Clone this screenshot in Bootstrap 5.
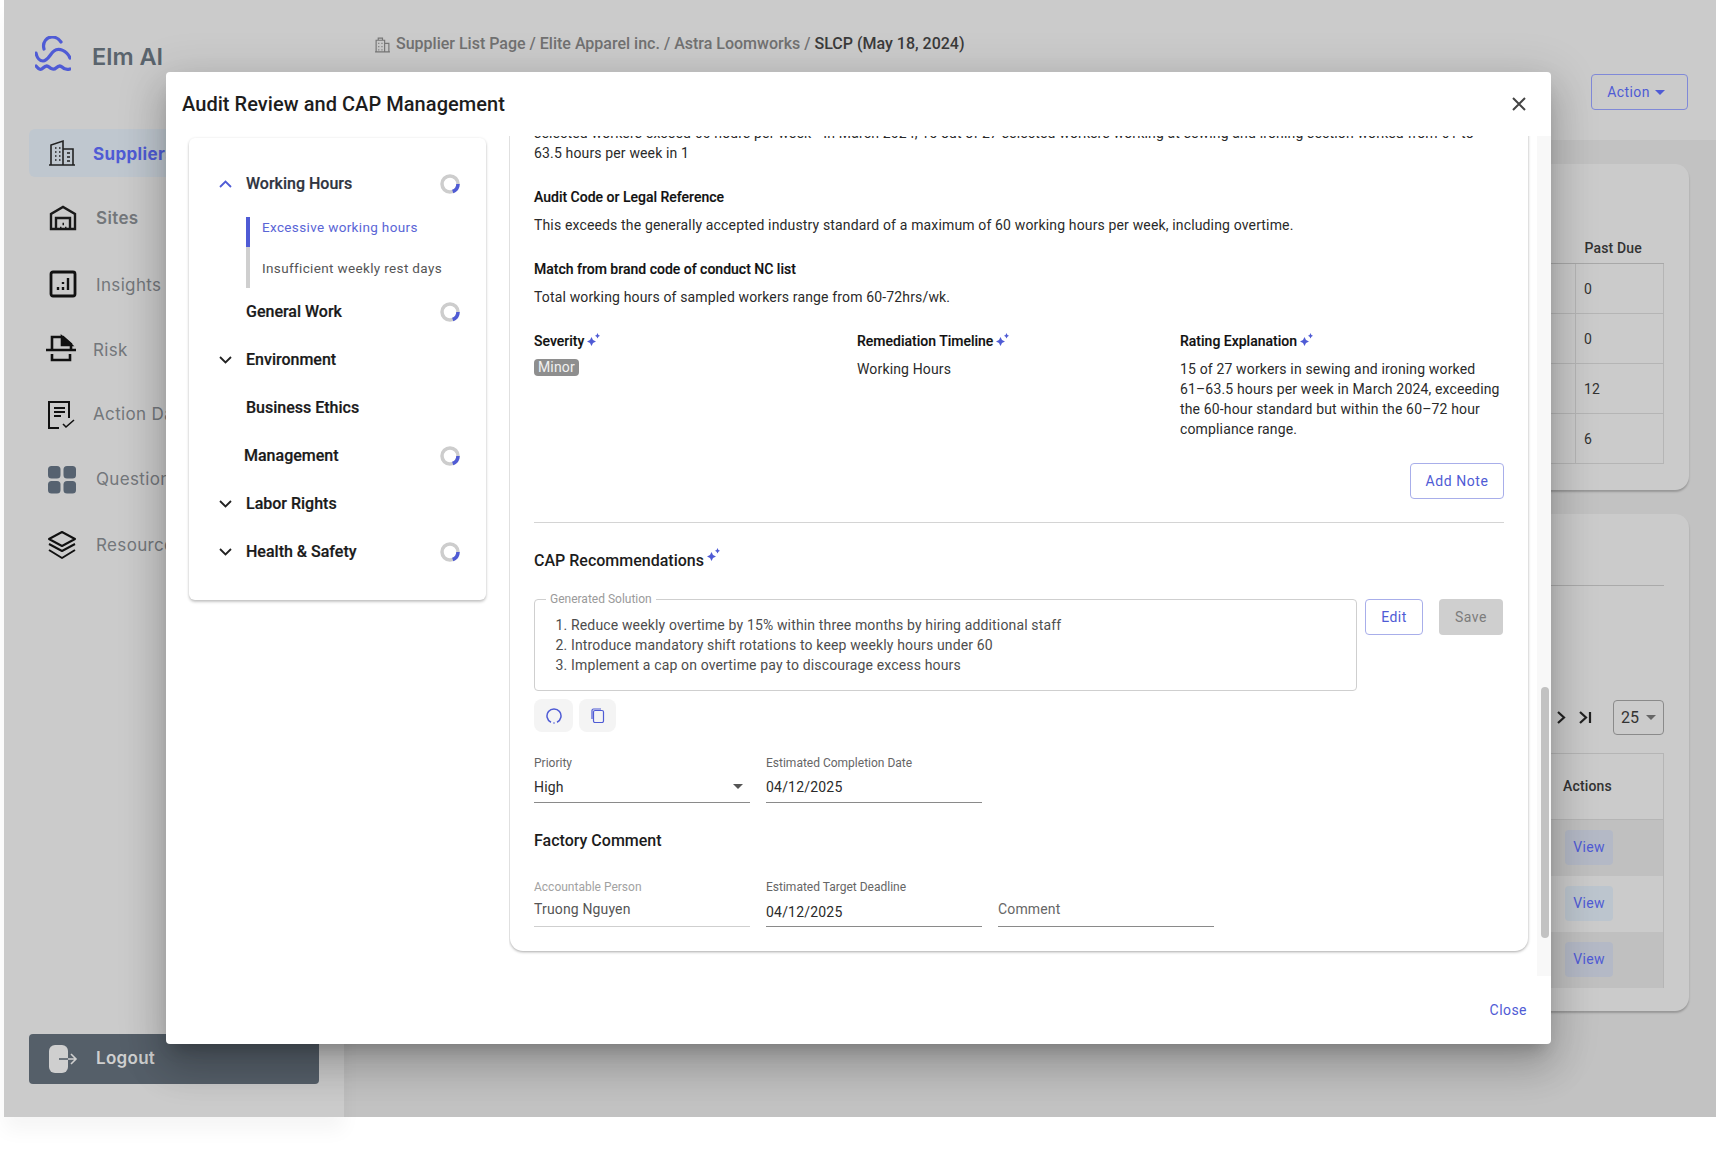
<!DOCTYPE html>
<html lang="en">
<head>
<meta charset="utf-8">
<title>Audit Review and CAP Management</title>
<link href="https://cdn.jsdelivr.net/npm/bootstrap@5.3.0/dist/css/bootstrap.min.css" rel="stylesheet">
<style>
html,body{height:1150px;overflow:hidden;background:#fff}
body{font-family:Roboto,"Liberation Sans",sans-serif;font-size:14px;color:#212121;position:relative}
svg{display:block;flex:none}
.app-shell{margin-left:4px;height:1117px;background:#c2c2c2;width:1712px}
.side-rail{width:340px;background:#cbcbcb;box-shadow:0 14px 18px rgba(0,0,0,.04);font-family:Inter,"Liberation Sans",sans-serif;padding:36px 25px 33px}
.brand-name{font-size:23.5px;font-weight:600;color:#5a646d;margin-left:21px;margin-top:5px}
.brand-row{margin-left:6px;height:36px;margin-bottom:57px}
.rail-item{height:48px;border-radius:6px;margin-bottom:17.4px;color:#73777b;font-size:17px;letter-spacing:.35px;white-space:nowrap;overflow:hidden}
.rail-item svg{width:30px;height:30px}
.rail-item.is-on{background:#bfc7cf;color:#4f5bd5;font-weight:700}
.rail-item.is-on span{padding-top:3px}
.rail-down span{padding-top:3px}
.rail-a{padding-left:18px}.rail-a svg{margin-right:16px}
.rail-b{padding-left:19px}.rail-b svg{margin-right:18px}
.rail-c{padding-left:17px}.rail-c svg{margin-right:17px}
.rail-d{padding-left:16px}.rail-d svg{margin-right:18px}
.rail-e{padding-left:18px}.rail-e svg{margin-right:19px}
.rail-f{padding-left:18px}.rail-f svg{margin-right:19px}
.rail-semi{font-weight:600}
.rail-logout{height:50px;background:#555f69;color:#cfcfcf;border-radius:4px;font-weight:600;font-size:17px;padding-left:19px;letter-spacing:.3px}
.rail-logout svg{margin-right:18px}
.top-strip{height:140px;background:#cbcbcb;padding:0 28px 0 30px}
.crumbs{padding-top:32px;font-size:16px;color:#717171;font-weight:500;height:74px}
.crumbs .sep{margin:0 4px}
.crumbs .cur{color:#3a3a3a}
.crumbs .first-crumb{margin-left:1px}
.act-btn{width:97px;height:36px;border:1px solid #8089d8;border-radius:4px;color:#4f5bd5;font-size:14px;font-weight:400;background:transparent;letter-spacing:.4px;padding:0 7px 0 0;gap:5px}
.caret-down{width:0;height:0;border-left:5px solid transparent;border-right:5px solid transparent;border-top:5px solid currentColor;display:inline-block}
.back-area{padding:24px 27px 0 22px}
.back-card{background:#cbcbcb;border-radius:14px;box-shadow:0 2px 2px rgba(0,0,0,.22);padding:0 25px}
.back-one{height:326px;padding-top:68px;margin-bottom:24px}
.back-two{height:497px;padding-top:71px}
.back-grid{width:100%;color:#333;border-collapse:collapse;letter-spacing:.15px}
.back-one .back-grid th{font-weight:500;height:31px;padding:2px 0 0 9px;border-bottom:1px solid #a8a8a8}
.back-one .back-grid td{height:50px;border-bottom:1px solid #b5b5b5;padding:2px 0 0 8px}
.back-one .back-grid .cell-num{width:88px;border-left:1px solid #b5b5b5;border-right:1px solid #b5b5b5}
.back-one .back-grid th.cell-num{border-left:0;border-right:0}
.back-one .back-grid th.cell-blank{border:0;border-bottom:1px solid #a8a8a8}
.rule-back{border-top:1px solid #aaa;height:115px}
.pager-row{height:53px;color:#333;position:relative}
.pager-next{margin-right:11px}
.page-size{width:51px;height:35px;border:1px solid #8a8a8a;border-radius:4px;font-size:16px;margin-left:21px;color:#333}
.page-size .caret-down{color:#666;margin-left:7px}
.back-two .back-grid th{height:66px;font-weight:500;border-top:1px solid #b5b5b5;border-right:1px solid #b5b5b5;border-bottom:1px solid #b5b5b5;padding-left:20px}
.back-two .back-grid .col-acts{width:121px}
.back-two .back-grid td{height:56px;border-right:1px solid #b5b5b5;padding-left:22px}
.back-two .back-grid tr.row-dark td{background:#c0c0c0}
.view-chip{width:48px;height:35px;background:#bcc5ce;border-radius:4px;color:#4f5bd5;font-weight:400;letter-spacing:.3px}
.row-dark .view-chip{background:#b4b9c6}
.review-dialog{position:absolute;left:166px;top:72px;width:1385px;height:972px;z-index:5;border-radius:4px;background:#fff;box-shadow:0 11px 15px -7px rgba(0,0,0,.2),0 24px 38px 3px rgba(0,0,0,.14),0 9px 46px 8px rgba(0,0,0,.12)}
.dlg-head{height:64px;padding:0 16px}
.dlg-title{font-size:20px;font-weight:500;color:#1d1d1d;margin:20px 0 0 0;letter-spacing:.05px}
.dlg-close{margin-right:9px;margin-top:24px;background:none;border:0;padding:0;height:16px}
.dlg-body{flex:1;min-height:0;overflow:hidden;padding-top:2px}
.topics-card{width:297px;height:462px;margin-left:23px;background:#fff;border-radius:6px;box-shadow:0 2px 3px rgba(0,0,0,.22),0 0 3px rgba(0,0,0,.08);padding:34px 26px 0 0;flex:none}
.topic-row{height:48px;font-size:16px;font-weight:500;color:#1a1a1a;position:relative;padding-left:57px;-webkit-text-stroke:.2px currentColor}
.topic-row.is-open{color:#30343f}
.topic-row.nudged{padding-left:55px}
.topic-row.first{margin-top:12px}
.topic-arrow{position:absolute;left:30px;top:8px}
.prog-ring{margin-left:auto;margin-top:2px}
.sub-topic{height:41px;font-size:13.5px;border-left:4px solid #cfcfcf;margin-left:57px;padding-left:12px;color:#555;letter-spacing:.35px;white-space:nowrap}
.sub-topic span{margin-top:2px}
.sub-topic.is-on{height:30px;border-color:#4f5bd5;color:#5a65d6}
.sub-topic.is-on span{margin-top:-9px}
.sub-wrap{margin-top:-3px}
.detail-pane{margin:-2px 0 68px 23px;position:relative;flex:1;min-width:0;overflow:hidden;padding:0 23px 0 2px}
.detail-inner{margin-top:-40px}
.detail-card{width:1018px;background:#fff;border-radius:0 0 13px 13px;box-shadow:0 1px 3px rgba(0,0,0,.35);padding:27px 24px 24px 24px;height:855px;margin-left:-1px}
.line-text{line-height:20px;color:#2a2a2a;letter-spacing:.15px}
.line-head{line-height:20px;font-weight:500;color:#111;font-size:14px;-webkit-text-stroke:.15px #111}
.gap-l{margin-top:24px}
.gap-s{margin-top:8px}
.spark{display:inline-block;vertical-align:top;margin-left:-1px;margin-top:2px}
.spark.on-cap{margin-top:-1px;margin-left:-1px}
.severity-tag{background:#8e8e8e;color:#f1f1f1;border-radius:4px;height:17px;line-height:17px;padding:0 4px;font-size:14px;display:inline-block;margin-top:8px;letter-spacing:.15px}
.three-col{display:grid;grid-template-columns:323px 323px 1fr;height:109px}
.note-btn{width:94px;height:36px;margin-top:23px;border:1px solid #a8aeea;border-radius:4px;background:#fff;color:#4f5bd5;font-size:14px;font-weight:400;letter-spacing:.55px;padding:0}
.split-rule{border-top:1px solid #d4d4d4;margin:23px 0 26px}
.cap-head{font-size:16px;font-weight:500;line-height:24px;color:#1c1c1c}
.cap-head.factory{margin-top:26px}
.solution-row{margin-top:26px}
.solution-box{position:relative;width:823px;height:92px;border:1px solid #cfcfcf;border-radius:4px;margin:0;padding:15px 0 0 15px;color:#4d4d4d;letter-spacing:.15px}
.solution-legend{position:absolute;left:11px;top:-8px;background:#fff;padding:0 4px;font-size:12px;line-height:14px;color:#9a9a9a;letter-spacing:0}
.solution-box ol{padding-left:21px;margin:0;line-height:20px}
.edit-btn{width:58px;height:36px;border:1px solid #a8aeea;border-radius:4px;background:#fff;color:#4f5bd5;font-weight:400;padding:0;margin-left:8px;letter-spacing:.4px}
.save-btn{width:64px;height:36px;border:0;border-radius:4px;background:#cfcfcf;color:#7c7c7c;font-weight:400;padding:0;margin-left:16px;letter-spacing:.5px}
.tool-btn{height:33px;background:#f4f4f4;border-radius:8px;border:0;padding:0}
.tool-a{width:39px}.tool-b{width:37px;margin-left:-2px}
.fields-one{margin-top:23px}
.fields-two{margin-top:26px}
.under-field{width:216px;margin-right:16px;position:relative}
.under-field.last-field{margin-right:0}
.field-label{font-size:12px;line-height:16px;color:#666}
.field-label.is-muted{color:#a2a2a2}
.field-value{height:32px;border-bottom:1px solid #8a8a8a;padding-top:6px;line-height:20px;color:#2b2b2b;letter-spacing:.2px}
.field-value.tall{padding-top:7px}
.field-value.is-muted{border-color:#cfcfcf;color:#555;padding-top:4px;letter-spacing:.15px}
.field-value.plain{color:#666;padding-top:4px;letter-spacing:.15px}
.field-caret{color:#555;margin-top:7px;margin-right:7px}
.sb-track{position:absolute;right:0;top:0;bottom:0;width:14px;background:#f8f8f8}
.sb-thumb{position:absolute;left:4px;top:551px;width:8px;height:251px;background:#c2c2c2;border-radius:4px}
.dlg-foot{position:absolute;right:24px;bottom:23px;color:#4f5bd5;font-weight:400;background:none;border:0;padding:0;letter-spacing:.45px}
</style>
</head>
<body>
<div class="app-shell d-flex">
  <aside class="side-rail d-flex flex-column flex-shrink-0">
    <div class="brand-row d-flex align-items-center">
      <svg width="36" height="36" viewBox="0 0 36 36" fill="none" stroke="#4f5bd5" stroke-width="3.2" stroke-linecap="round" stroke-linejoin="round"><path d="M9 13C7 6 12 1 17 1c4 0 7 2 9 5"/><path d="M1 17c1 5 4 8 7 8 5 0 7-7 11-10 5-4 13 0 16 7"/><path d="M1 30c3 4 5 4 7 2 2-2 4-3 6-1s5 3 7 1 4-3 6-1 5 3 8 2"/></svg>
      <span class="brand-name">Elm AI</span>
    </div>
    <div class="rail-item rail-a is-on d-flex align-items-center">
      <svg viewBox="0 0 30 30" fill="none" stroke="#222" stroke-width="1.6"><path d="M4 27V7l12-4v24M16 11h10v16H2h26"/><path d="M8 10h1.500M12 10h1.500M8 14h1.500M12 14h1.500M8 18h1.500M12 18h1.500M8 22h1.500M12 22h1.500M20 15h3M20 19h3M20 23h3" stroke-width="1.400"/></svg>
      <span>Suppliers</span>
    </div>
    <div class="rail-item rail-b rail-semi d-flex align-items-center">
      <svg viewBox="0 0 30 30" fill="none" stroke="#1a1a1a" stroke-width="2.4"><path d="M3 26V11L15 4l12 7v15z"/><path d="M8 26V15h14v11M12 25h1.500M17 25h1.500M14.500 21h1.500"/></svg>
      <span>Sites</span>
    </div>
    <div class="rail-item rail-b rail-down d-flex align-items-center">
      <svg viewBox="0 0 30 30" fill="none" stroke="#111" stroke-width="2.8"><rect x="3" y="3" width="24" height="24" rx="2"/><path d="M10 21v-3M15 21v-3M15 15v-2M20 21V9" stroke-width="2.400"/></svg>
      <span>Insights</span>
    </div>
    <div class="rail-item rail-c rail-down d-flex align-items-center">
      <svg viewBox="0 0 30 30" fill="none" stroke="#111" stroke-width="2.6"><path d="M0 16h30"/><path d="M6 16V3h11l8 7v6"/><path d="M16 3l9 8h-9z" fill="#111"/><path d="M6 20v6h18v-6"/></svg>
      <span>Risk</span>
    </div>
    <div class="rail-item rail-d d-flex align-items-center">
      <svg viewBox="0 0 30 30" fill="none" stroke="#111" stroke-width="2"><path d="M14 28H4V2h20v16"/><path d="M9 8h11M9 12h11M9 16h7"/><path d="M18 24l3 3 8-7" stroke-width="1.600"/></svg>
      <span>Action Dashboard</span>
    </div>
    <div class="rail-item rail-e d-flex align-items-center">
      <svg viewBox="0 0 30 30" fill="#566270"><rect x="1" y="1" width="12.500" height="12.500" rx="3.500"/><rect x="16.500" y="1" width="12.500" height="12.500" rx="3.500"/><rect x="1" y="16" width="12.500" height="12.500" rx="3.500"/><rect x="16.500" y="16" width="12.500" height="12.500" rx="3.500"/></svg>
      <span>Questionnaires</span>
    </div>
    <div class="rail-item rail-f d-flex align-items-center">
      <svg viewBox="0 0 30 30" fill="none" stroke="#111" stroke-width="2" stroke-linejoin="round"><path d="M15 2l13 7-13 7L2 9z"/><path d="M2 14l13 7 13-7"/><path d="M2 20l13 8 13-8"/></svg>
      <span>Resources</span>
    </div>
    <div class="rail-logout d-flex align-items-center mt-auto">
      <svg width="30" height="30" viewBox="0 0 30 30" fill="none"><rect x="1" y="1" width="19" height="28" rx="6" fill="#cfcfcf"/><path d="M11 15h17M23 10l5 5-5 5" stroke="#cfcfcf" stroke-width="1.600"/><path d="M11 15h9" stroke="#555f69" stroke-width="1.600"/></svg>
      <span>Logout</span>
    </div>
  </aside>
  <main class="flex-grow-1 d-flex flex-column">
    <div class="top-strip">
      <div class="crumbs d-flex align-items-start">
        <svg width="17" height="17" viewBox="0 0 16 16" fill="none" stroke="#777" stroke-width="1.100" class="me-1 mt-1"><path d="M1 15h14M2 15V4h8v11M10 7h4v8M4 7h1M7 7h1M4 10h1M7 10h1M4 13h1M7 13h1M4 4V2h4v2"/></svg>
        <span class="first-crumb">Supplier List Page</span><span class="sep">/</span><span>Elite Apparel inc.</span><span class="sep">/</span><span>Astra Loomworks</span><span class="sep">/</span><span class="cur">SLCP (May 18, 2024)</span>
      </div>
      <div class="d-flex justify-content-end">
        <button class="act-btn d-flex align-items-center justify-content-center" type="button">Action <span class="caret-down"></span></button>
      </div>
    </div>
    <div class="back-area">
      <section class="back-card back-one">
        <table class="back-grid">
          <tr><th class="cell-blank"></th><th class="cell-num">Past Due</th></tr>
          <tr><td></td><td class="cell-num">0</td></tr>
          <tr><td></td><td class="cell-num">0</td></tr>
          <tr><td></td><td class="cell-num">12</td></tr>
          <tr><td></td><td class="cell-num">6</td></tr>
        </table>
      </section>
      <section class="back-card back-two">
        <div class="rule-back"></div>
        <div class="pager-row d-flex justify-content-end align-items-start">
          <svg width="12" height="35" viewBox="0 0 12 35" fill="none" stroke="#222" stroke-width="2.200" class="pager-next"><path d="M3 12l6 5.500-6 5.500"/></svg>
          <svg width="14" height="35" viewBox="0 0 14 35" fill="none" stroke="#222" stroke-width="2.200"><path d="M2 12l6 5.500-6 5.500M12 12v11"/></svg>
          <div class="page-size d-flex align-items-center justify-content-center">25<span class="caret-down"></span></div>
        </div>
        <table class="back-grid">
          <tr><th class="border-start-0"></th><th class="col-acts border-start-0">Actions</th></tr>
          <tr class="row-dark"><td></td><td><div class="view-chip d-flex align-items-center justify-content-center">View</div></td></tr>
          <tr><td></td><td><div class="view-chip d-flex align-items-center justify-content-center">View</div></td></tr>
          <tr class="row-dark"><td></td><td><div class="view-chip d-flex align-items-center justify-content-center">View</div></td></tr>
        </table>
      </section>
    </div>
  </main>
</div>

<div class="review-dialog d-flex flex-column" role="dialog">
  <div class="dlg-head d-flex justify-content-between flex-shrink-0">
    <h5 class="dlg-title">Audit Review and CAP Management</h5>
    <button class="dlg-close" type="button" aria-label="Close"><svg width="14" height="14" viewBox="0 0 14 14" fill="none" stroke="#444" stroke-width="2"><path d="M1 1l12 12M13 1L1 13"/></svg></button>
  </div>
  <div class="dlg-body d-flex">
    <nav class="topics-card">
      <div class="topic-row is-open d-flex align-items-start">
        <svg class="topic-arrow" width="13" height="8" viewBox="0 0 13 8" fill="none" stroke="#4f5bd5" stroke-width="1.800"><path d="M1 7l5.500-5.500L12 7"/></svg>
        <span>Working Hours</span>
        <svg class="prog-ring" width="20" height="20" viewBox="0 0 20 20" fill="none" stroke-width="3.500"><circle cx="10" cy="10" r="8" stroke="#cdcdcd"/><path d="M18 10A8 8 0 0 1 12.700 17.500" stroke="#4f5bd5"/></svg>
      </div>
      <div class="sub-wrap">
        <div class="sub-topic is-on d-flex align-items-center"><span>Excessive working hours</span></div>
        <div class="sub-topic d-flex align-items-center"><span>Insufficient weekly rest days</span></div>
      </div>
      <div class="topic-row first d-flex align-items-start">
        <span>General Work</span>
        <svg class="prog-ring" width="20" height="20" viewBox="0 0 20 20" fill="none" stroke-width="3.500"><circle cx="10" cy="10" r="8" stroke="#cdcdcd"/><path d="M18 10A8 8 0 0 1 12.700 17.500" stroke="#4f5bd5"/></svg>
      </div>
      <div class="topic-row d-flex align-items-start">
        <svg class="topic-arrow" width="13" height="8" viewBox="0 0 13 8" fill="none" stroke="#222" stroke-width="1.800"><path d="M1 1l5.500 5.500L12 1"/></svg>
        <span>Environment</span>
      </div>
      <div class="topic-row d-flex align-items-start"><span>Business Ethics</span></div>
      <div class="topic-row nudged d-flex align-items-start">
        <span>Management</span>
        <svg class="prog-ring" width="20" height="20" viewBox="0 0 20 20" fill="none" stroke-width="3.500"><circle cx="10" cy="10" r="8" stroke="#cdcdcd"/><path d="M18 10A8 8 0 0 1 12.700 17.500" stroke="#4f5bd5"/></svg>
      </div>
      <div class="topic-row d-flex align-items-start">
        <svg class="topic-arrow" width="13" height="8" viewBox="0 0 13 8" fill="none" stroke="#222" stroke-width="1.800"><path d="M1 1l5.500 5.500L12 1"/></svg>
        <span>Labor Rights</span>
      </div>
      <div class="topic-row d-flex align-items-start">
        <svg class="topic-arrow" width="13" height="8" viewBox="0 0 13 8" fill="none" stroke="#222" stroke-width="1.800"><path d="M1 1l5.500 5.500L12 1"/></svg>
        <span>Health &amp; Safety</span>
        <svg class="prog-ring" width="20" height="20" viewBox="0 0 20 20" fill="none" stroke-width="3.500"><circle cx="10" cy="10" r="8" stroke="#cdcdcd"/><path d="M18 10A8 8 0 0 1 12.700 17.500" stroke="#4f5bd5"/></svg>
      </div>
    </nav>
    <div class="detail-pane">
      <div class="detail-inner">
        <article class="detail-card">
          <div class="line-text">selected workers exceed 60 hours per week • In March 2024, 15 out of 27 selected workers working at sewing and ironing section worked from 61 to 63.5 hours per week in 1</div>
          <div class="line-head gap-l">Audit Code or Legal Reference</div>
          <div class="line-text gap-s">This exceeds the generally accepted industry standard of a maximum of 60 working hours per week, including overtime.</div>
          <div class="line-head gap-l">Match from brand code of conduct NC list</div>
          <div class="line-text gap-s">Total working hours of sampled workers range from 60-72hrs/wk.</div>
          <div class="three-col gap-l">
            <div>
              <div class="line-head">Severity <svg class="spark" width="13" height="14" viewBox="0 0 13 14" fill="#4f5bd5"><path d="M4.500 4l1.500 3 3 1.500-3 1.500-1.500 3-1.500-3-3-1.500 3-1.500zM10.500 0l.9 1.900 1.600.9-1.600.9-.9 1.900-.9-1.900L8 2.800l1.600-.9z"/></svg></div>
              <span class="severity-tag">Minor</span>
            </div>
            <div>
              <div class="line-head">Remediation Timeline <svg class="spark" width="13" height="14" viewBox="0 0 13 14" fill="#4f5bd5"><path d="M4.500 4l1.500 3 3 1.500-3 1.500-1.500 3-1.500-3-3-1.500 3-1.500zM10.500 0l.9 1.900 1.600.9-1.600.9-.9 1.900-.9-1.900L8 2.800l1.600-.9z"/></svg></div>
              <div class="line-text gap-s">Working Hours</div>
            </div>
            <div>
              <div class="line-head">Rating Explanation <svg class="spark" width="13" height="14" viewBox="0 0 13 14" fill="#4f5bd5"><path d="M4.500 4l1.500 3 3 1.500-3 1.500-1.500 3-1.500-3-3-1.500 3-1.500zM10.500 0l.9 1.900 1.600.9-1.600.9-.9 1.900-.9-1.900L8 2.800l1.600-.9z"/></svg></div>
              <div class="line-text gap-s">15 of 27 workers in sewing and ironing worked 61–63.5 hours per week in March 2024, exceeding the 60-hour standard but within the 60–72 hour compliance range.</div>
            </div>
          </div>
          <div class="d-flex justify-content-end"><button class="note-btn" type="button">Add Note</button></div>
          <div class="split-rule"></div>
          <div class="cap-head">CAP Recommendations <svg class="spark on-cap" width="13" height="14" viewBox="0 0 13 14" fill="#4f5bd5"><path d="M4.500 4l1.500 3 3 1.500-3 1.500-1.500 3-1.500-3-3-1.500 3-1.500zM10.500 0l.9 1.900 1.600.9-1.600.9-.9 1.900-.9-1.900L8 2.800l1.600-.9z"/></svg></div>
          <div class="d-flex align-items-start solution-row">
            <div class="solution-box">
              <span class="solution-legend">Generated Solution</span>
              <ol>
                <li>Reduce weekly overtime by 15% within three months by hiring additional staff</li>
                <li>Introduce mandatory shift rotations to keep weekly hours under 60</li>
                <li>Implement a cap on overtime pay to discourage excess hours</li>
              </ol>
            </div>
            <button class="edit-btn" type="button">Edit</button>
            <button class="save-btn" type="button">Save</button>
          </div>
          <div class="d-flex gap-2 mt-2">
            <button class="tool-btn tool-a d-flex align-items-center justify-content-center" type="button"><svg width="16" height="16" viewBox="0 0 16 16" fill="none" stroke="#4f5bd5" stroke-width="1.500"><path d="M5 14.200A7 7 0 1 1 11 14.200"/><circle cx="8" cy="15" r=".8" fill="#4f5bd5" stroke="none"/></svg></button>
            <button class="tool-btn tool-b d-flex align-items-center justify-content-center" type="button"><svg width="14" height="15" viewBox="0 0 14 15" fill="none" stroke="#4f5bd5" stroke-width="1.200"><rect x="2.500" y="2.500" width="10" height="12" rx="1.500"/><path d="M1 11V2.500A1.500 1.500 0 0 1 2.500 1H10"/></svg></button>
          </div>
          <div class="d-flex fields-one">
            <div class="under-field">
              <div class="field-label">Priority</div>
              <div class="field-value d-flex justify-content-between">High<span class="caret-down field-caret"></span></div>
            </div>
            <div class="under-field">
              <div class="field-label">Estimated Completion Date</div>
              <div class="field-value">04/12/2025</div>
            </div>
          </div>
          <div class="cap-head factory">Factory Comment</div>
          <div class="d-flex fields-two">
            <div class="under-field">
              <div class="field-label is-muted">Accountable Person</div>
              <div class="field-value is-muted">Truong Nguyen</div>
            </div>
            <div class="under-field">
              <div class="field-label">Estimated Target Deadline</div>
              <div class="field-value tall">04/12/2025</div>
            </div>
            <div class="under-field last-field">
              <div class="field-label">&nbsp;</div>
              <div class="field-value plain">Comment</div>
            </div>
          </div>
        </article>
      </div>
      <div class="sb-track"><div class="sb-thumb"></div></div>
    </div>
  </div>
  <button class="dlg-foot" type="button">Close</button>
</div>
<script src="https://cdn.jsdelivr.net/npm/bootstrap@5.3.0/dist/js/bootstrap.bundle.min.js"></script>
</body>
</html>
